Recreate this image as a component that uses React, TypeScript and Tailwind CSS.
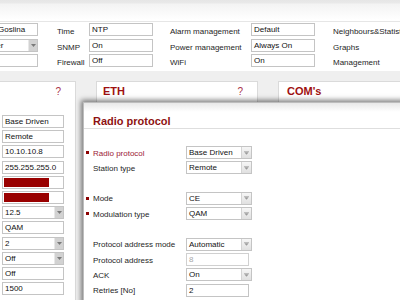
import React from "react";

const ArrowDark = () => (
  <div className="absolute right-0 top-0 bottom-0 w-[9px] bg-[#d2d2d2] border-l border-[#e8e8e8] flex items-center justify-center">
    <svg width="5" height="3" viewBox="0 0 5 3">
      <path d="M0 0H5L2.5 3Z" fill="#7a7a7a" />
    </svg>
  </div>
);

const ArrowLight = () => (
  <div className="absolute right-0 top-0 bottom-0 w-[10px] bg-[linear-gradient(#f6f6f6,#e0e0e0)] border-l border-[#d4d4d4] flex items-center justify-center">
    <svg width="5" height="4" viewBox="0 0 5 4">
      <path d="M0 0.5H5" stroke="#b0b0b0" strokeWidth="0.8" />
      <path d="M0.3 1.2H4.7L2.5 3.8Z" fill="#9a9a9a" />
    </svg>
  </div>
);

function Inp({ v, cls = "", muted = false }: { v: string; cls?: string; muted?: boolean }) {
  return (
    <div
      className={
        "h-[13px] shrink-0 border border-[#c4c4c4] bg-white text-[8px] leading-[11px] whitespace-nowrap overflow-hidden " +
        (muted ? "text-[#a8a8a8] " : "text-[#111] ") +
        cls
      }
    >
      {v}
    </div>
  );
}

function Sel({ v, cls = "", light = false }: { v: string; cls?: string; light?: boolean }) {
  return (
    <div
      className={
        "relative h-[13px] shrink-0 border border-[#c4c4c4] bg-white pl-[2px] text-[8px] leading-[11px] text-[#111] whitespace-nowrap overflow-hidden " +
        cls
      }
    >
      {v}
      {light ? <ArrowLight /> : <ArrowDark />}
    </div>
  );
}

function RedBar() {
  return (
    <div className="h-[13px] w-[62px] shrink-0 border border-[#c4c4c4] bg-white p-[1px]">
      <div className="h-full w-[45px] bg-[#990000]" />
    </div>
  );
}

type Row =
  | null
  | { label: string; bullet?: boolean; red?: boolean; kind: "sel" | "inp" | "dis" | "short"; v: string };

const modalRows: Row[] = [
  { label: "Radio protocol", bullet: true, red: true, kind: "sel", v: "Base Driven" },
  { label: "Station type", kind: "sel", v: "Remote" },
  null,
  { label: "Mode", bullet: true, kind: "sel", v: "CE" },
  { label: "Modulation type", bullet: true, kind: "sel", v: "QAM" },
  null,
  { label: "Protocol address mode", kind: "sel", v: "Automatic" },
  { label: "Protocol address", kind: "dis", v: "8" },
  { label: "ACK", kind: "sel", v: "On" },
  { label: "Retries [No]", kind: "short", v: "2" },
];

export default function App() {
  return (
    <div className="relative w-[400px] h-[300px] overflow-hidden bg-[#efefef] font-['Liberation_Sans',Arial,sans-serif]">
      {/* top strip */}
      <div className="h-[22px] bg-[linear-gradient(to_bottom,#e6e6e6_0px,#e9e9e9_3px,#f3f3f3_4px,#f6f6f6_8px,#ffffff_20px)] border-b border-[#e6e6e6]" />

      {/* top form */}
      <div className="h-[49px] bg-white pt-[1px] flex">
        <div className="ml-[-24px] w-[62px] shrink-0 flex flex-col gap-[2.5px]">
          <Inp v="Goslina" cls="w-[62px] pl-[21px]" />
          <Sel v="Master" cls="w-[62px]" />
          <Inp v="" cls="w-[62px]" />
        </div>
        <div className="ml-[19px] w-[32px] shrink-0 flex flex-col gap-[2.5px] text-[8px] text-[#262626]">
          <div className="h-[13px] leading-[13px] pt-[2px]">Time</div>
          <div className="h-[13px] leading-[13px] pt-[2px]">SNMP</div>
          <div className="h-[13px] leading-[13px] pt-[2px]">Firewall</div>
        </div>
        <div className="w-[64px] shrink-0 flex flex-col gap-[2.5px]">
          <Inp v="NTP" cls="w-[64px] pl-[2px]" />
          <Inp v="On" cls="w-[64px] pl-[2px]" />
          <Inp v="Off" cls="w-[64px] pl-[2px]" />
        </div>
        <div className="ml-[17px] w-[81px] shrink-0 flex flex-col gap-[2.5px] text-[8px] text-[#262626] whitespace-nowrap">
          <div className="h-[13px] leading-[13px] pt-[2px]">Alarm management</div>
          <div className="h-[13px] leading-[13px] pt-[2px]">Power management</div>
          <div className="h-[13px] leading-[13px] pt-[2px]">WiFi</div>
        </div>
        <div className="w-[64px] shrink-0 flex flex-col gap-[2.5px]">
          <Inp v="Default" cls="w-[64px] pl-[2px]" />
          <Inp v="Always On" cls="w-[64px] pl-[2px]" />
          <Inp v="On" cls="w-[64px] pl-[2px]" />
        </div>
        <div className="ml-[18px] shrink-0 flex flex-col gap-[2.5px] text-[8px] text-[#262626] whitespace-nowrap">
          <div className="h-[13px] leading-[13px] pt-[2px]">Neighbours&amp;Statistics</div>
          <div className="h-[13px] leading-[13px] pt-[2px]">Graphs</div>
          <div className="h-[13px] leading-[13px] pt-[2px]">Management</div>
        </div>
      </div>

      {/* panels */}
      <div className="mt-[10px] ml-[-86px] flex gap-[20px]">
        <div className="w-[162px] h-[240px] shrink-0 border border-[#dadada] bg-white">
          <div className="h-[19px] pt-[3px] pr-[14px] flex justify-end leading-[13px]">
            <span className="text-[10px] text-[#a8324a]">?</span>
          </div>
          <div className="pt-[14px] pr-[11px] flex flex-col items-end gap-[2.2px]">
            <Inp v="Base Driven" cls="w-[62px] pl-[2px]" />
            <Inp v="Remote" cls="w-[62px] pl-[2px]" />
            <Inp v="10.10.10.8" cls="w-[62px] pl-[2px]" />
            <Inp v="255.255.255.0" cls="w-[62px] pl-[2px]" />
            <RedBar />
            <RedBar />
            <Sel v="12.5" cls="w-[62px]" />
            <Inp v="QAM" cls="w-[62px] pl-[2px]" />
            <Sel v="2" cls="w-[62px]" />
            <Sel v="Off" cls="w-[62px]" />
            <Inp v="Off" cls="w-[62px] pl-[2px]" />
            <Inp v="1500" cls="w-[62px] pl-[2px]" />
          </div>
        </div>
        <div className="w-[162px] h-[240px] shrink-0 border border-[#dadada] bg-white">
          <div className="h-[19px] pt-[3px] pl-[6px] pr-[14px] flex justify-between leading-[13px]">
            <span className="text-[11px] font-bold text-[#9e1010]">ETH</span>
            <span className="text-[10px] text-[#a8324a]">?</span>
          </div>
        </div>
        <div className="w-[162px] h-[240px] shrink-0 border border-[#dadada] bg-white">
          <div className="h-[19px] pt-[3px] pl-[8px] flex leading-[13px]">
            <span className="text-[11px] font-bold text-[#9e1010]">COM's</span>
          </div>
        </div>
      </div>

      {/* modal dialog */}
      <div className="absolute left-[83px] top-[102px] w-[330px] h-[220px] bg-white border border-[#bdbdbd] shadow-[-2px_-2px_5px_rgba(0,0,0,0.5)]">
        <div className="h-[26px] pt-[11px] pl-[9px] border-b border-[#dedede] bg-[linear-gradient(#e8e8e8_0px,#ffffff_9px)]">
          <div className="text-[11px] leading-[14px] font-bold text-[#8e1212]">Radio protocol</div>
        </div>
        <div className="pt-[17px] flex flex-col gap-[2.3px]">
          {modalRows.map((r, i) =>
            r === null ? (
              <div key={i} className="h-[13px]" />
            ) : (
              <div key={i} className="h-[13px] flex items-center">
                <div className="w-[102px] shrink-0 flex items-center">
                  <div className="w-[9px] pl-[2px] flex items-center">
                    {r.bullet ? <div className="w-[2.5px] h-[2.5px] bg-[#8b0000]" /> : null}
                  </div>
                  <div
                    className={
                      "text-[8px] leading-[13px] pt-[1px] whitespace-nowrap " +
                      (r.red ? "text-[#9c1a36]" : "text-[#262626]")
                    }
                  >
                    {r.label}
                  </div>
                </div>
                {r.kind === "sel" ? (
                  <Sel v={r.v} light cls="w-[66px]" />
                ) : r.kind === "dis" ? (
                  <Inp v={r.v} muted cls="w-[63px] pl-[2px] border-[#d0d0d0]" />
                ) : (
                  <Inp v={r.v} cls="w-[63px] pl-[2px]" />
                )}
              </div>
            )
          )}
        </div>
      </div>
    </div>
  );
}
